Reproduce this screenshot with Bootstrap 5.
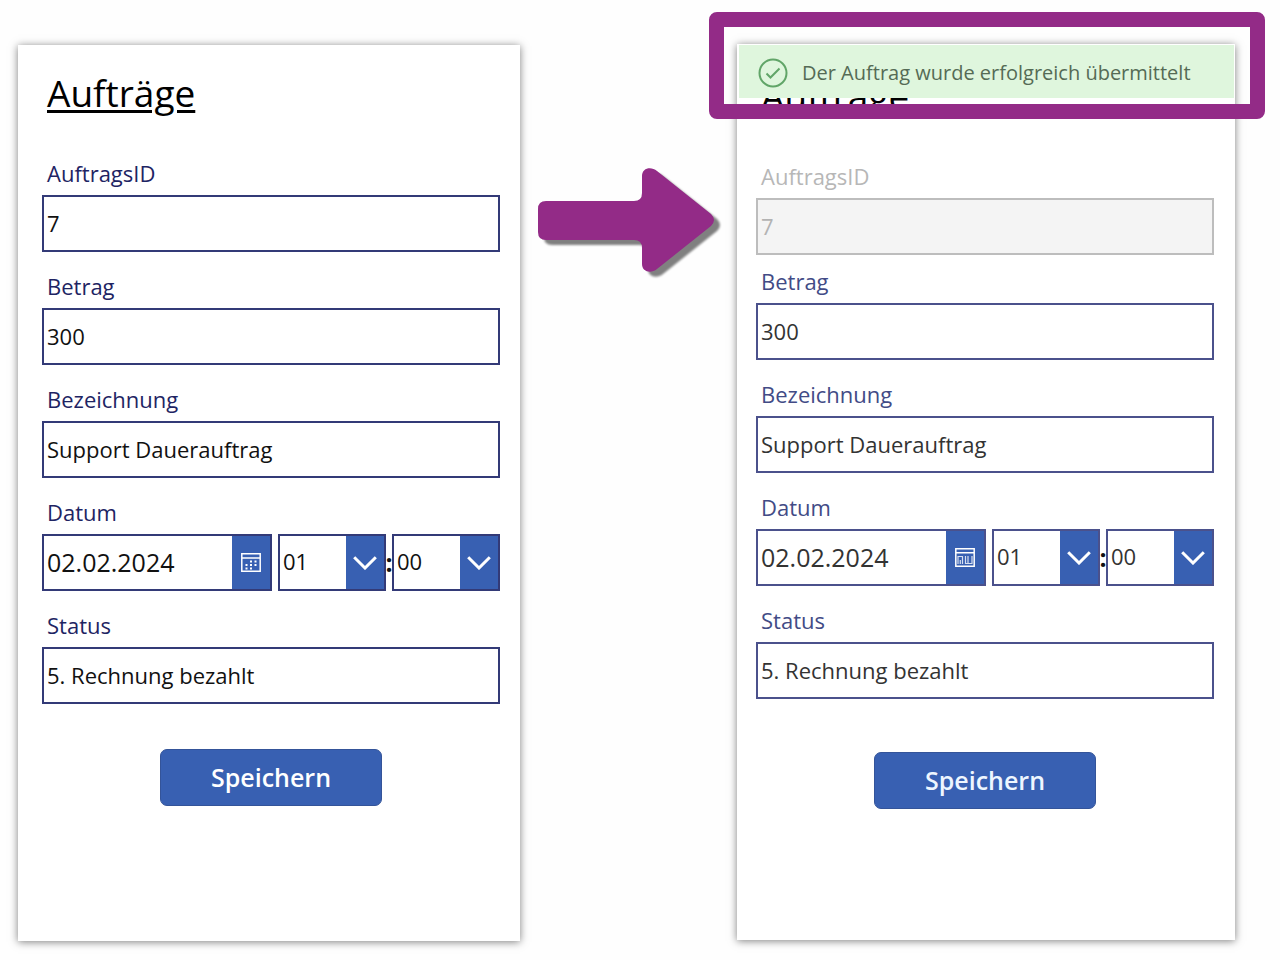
<!DOCTYPE html>
<html lang="de">
<head>
<meta charset="utf-8">
<meta name="viewport" content="width=device-width, initial-scale=1">
<title>Aufträge</title>
<link href="https://cdn.jsdelivr.net/npm/bootstrap@5.3.0/dist/css/bootstrap.min.css" rel="stylesheet">
<style>
  :root { --ink: #1e2463; --line: #333a77; --blue: #3860b2; --plum: #932b87; }
  body { font-family: "Open Sans", "Noto Sans", sans-serif; font-size: 22px; color: #111; background: #fefefe; }
  .stage { display: grid; grid-template-columns: minmax(0, 502fr) 217px minmax(0, 498fr); padding: 44px 45px 18px 18px; }
  .panel { background: #fff; min-height: 896px; box-shadow: 0 1px 8px rgba(0,0,0,.5); padding: 0 20px 40px 24px; }
  .panel-before { margin-top: 1px; margin-bottom: -1px; }
  .panel-after { padding-left: 19px; padding-right: 21px; }
  .panel h1 { font-size: 37px; line-height: 54px; font-weight: 400; color: #000; text-decoration: underline; text-decoration-thickness: 3px; text-underline-offset: 3px; margin: 0 0 39px; padding: 21px 5px 0; }
  .panel-after h1 { padding-top: 25px; }
  .field { margin-bottom: 20px; }
  .field label { display: block; line-height: 28px; margin-bottom: 8px; padding-left: 5px; color: var(--ink); }
  .box { width: 100%; height: 57px; border: 2px solid var(--line); border-radius: 0; background: #fff; color: #111; padding: 0 3px 2px; font-size: 22px; outline-offset: 0; }
  .split { display: grid; grid-template-columns: minmax(0, 230fr) 6px minmax(0, 108fr) 6px minmax(0, 108fr); }
  .date-box { display: flex; padding: 0; }
  .date-box input { flex: 1; min-width: 0; border: 0; background: none; padding: 0 3px; font-size: 25px; color: inherit; }
  .date-box button, .chev { width: 38px; border: 0; padding: 0; background: var(--blue); color: #fff; display: flex; align-items: center; justify-content: center; }
  .chev { top: 2px; bottom: 2px; right: 2px; pointer-events: none; }
  select.box { appearance: none; }
  .colon { font-weight: 700; font-size: 25px; line-height: 57px; display: flex; justify-content: center; }
  .save { width: 222px; height: 57px; background: var(--blue); color: #fff; border: 1px solid #345499; border-radius: 7px; font-size: 25px; font-weight: 600; margin-top: 25px; }
  .panel-after .field label { color: #424b86; }
  .panel-after .box { color: #333; border-color: #4b518c; }
  .panel-after .save { margin-top: 33px; color: #eef6ff; }
  .panel-after .field.locked { margin-bottom: 12px; }
  .panel-after .field.locked label { color: #b7b7b7; }
  .panel-after .locked .box { color: #b3b3b3; background: #f4f4f4; border-color: #bdbdbd; opacity: 1; }
  .notice { top: 1px; left: 2px; right: 1px; height: 53px; background: #dff6dd; color: #556b55; padding: 3px 19px 0; gap: 14px; white-space: nowrap; font-size: 20px; font-weight: 500; }
  .spot { top: -32px; left: -28px; right: -30px; height: 107px; border: 15px solid var(--plum); border-radius: 8px; z-index: 3; pointer-events: none; }
  .arrow { margin: 124px 0 0 18px; overflow: visible; filter: drop-shadow(6px 5px 1px #808080); }
</style>
</head>
<body>
<svg class="d-none">
  <symbol id="cal" viewBox="0 0 20 19"><g fill="none" stroke="currentColor" stroke-width="1.5"><path d="M.8.8h18.4v17.4H.8zM.8 5h18.4"/></g><path fill="currentColor" d="M9 7.5h2v2H9zm4.500 0h2v2h-2zM4.500 11h2v2h-2zM9 11h2v2H9zm4.500 0h2v2h-2zM4.500 14.500h2v2h-2zM9 14.500h2v2H9z"/></symbol>
  <symbol id="calpress" viewBox="0 0 20 19"><g fill="none" stroke="currentColor" stroke-width="1.500"><path d="M.8.8h18.4v17.4H.8zM.8 4.800h18.4"/><path stroke-width="1.200" opacity=".8" d="M3 16V8.500h4.500V16M5.300 16v-4M10.500 8v7.500h2.500V8M13 15.500h4V8"/></g></symbol>
  <symbol id="down" viewBox="0 0 24 14"><path d="M1.200 1.300 12 12 22.800 1.300" fill="none" stroke="currentColor" stroke-width="3"/></symbol>
</svg>
<main class="stage">
  <form class="panel panel-before">
    <h1>Aufträge</h1>
    <div class="field"><label for="a1">AuftragsID</label><input class="box" id="a1" value="7"></div>
    <div class="field"><label for="a2">Betrag</label><input class="box" id="a2" value="300"></div>
    <div class="field"><label for="a3">Bezeichnung</label><input class="box" id="a3" value="Support Dauerauftrag"></div>
    <div class="field"><label for="a4">Datum</label>
      <div class="split">
        <div class="box date-box"><input id="a4" value="02.02.2024"><button type="button" aria-label="Kalender"><svg width="20" height="19"><use href="#cal"/></svg></button></div>
        <span></span>
        <div class="position-relative"><select class="box" aria-label="Stunde"><option>01</option></select><span class="chev position-absolute"><svg width="24" height="14"><use href="#down"/></svg></span></div>
        <span class="colon">:</span>
        <div class="position-relative"><select class="box" aria-label="Minute"><option>00</option></select><span class="chev position-absolute"><svg width="24" height="14"><use href="#down"/></svg></span></div>
      </div>
    </div>
    <div class="field"><label for="a5">Status</label><input class="box" id="a5" value="5. Rechnung bezahlt"></div>
    <div class="text-center"><button type="button" class="save">Speichern</button></div>
  </form>

  <svg class="arrow" width="176" height="105" viewBox="0 0 176 105" aria-hidden="true"><path fill="#932b87" d="M8 33H96Q104 33 104 25V8C104 0 113-2 119 3L173 46Q179 52 173 58L119 101C113 106 104 104 104 96V80Q104 72 96 72H8Q0 72 0 64V41Q0 33 8 33Z"/></svg>

  <form class="panel panel-after position-relative">
    <h1>Aufträge</h1>
    <div class="notice position-absolute d-flex align-items-center" role="status">
      <svg class="flex-shrink-0" width="30" height="30" viewBox="0 0 30 30" fill="none" stroke="#61a568" stroke-width="2" aria-hidden="true"><circle cx="15" cy="15" r="13.500"/><path d="m8.500 15.500 4 4 9-9"/></svg>
      <span>Der Auftrag wurde erfolgreich übermittelt</span>
    </div>
    <div class="spot position-absolute"></div>
    <div class="field locked"><label for="b1">AuftragsID</label><input class="box" id="b1" value="7" disabled></div>
    <div class="field"><label for="b2">Betrag</label><input class="box" id="b2" value="300"></div>
    <div class="field"><label for="b3">Bezeichnung</label><input class="box" id="b3" value="Support Dauerauftrag"></div>
    <div class="field"><label for="b4">Datum</label>
      <div class="split">
        <div class="box date-box"><input id="b4" value="02.02.2024"><button type="button" aria-label="Kalender"><svg width="20" height="19"><use href="#calpress"/></svg></button></div>
        <span></span>
        <div class="position-relative"><select class="box" aria-label="Stunde"><option>01</option></select><span class="chev position-absolute"><svg width="24" height="14"><use href="#down"/></svg></span></div>
        <span class="colon">:</span>
        <div class="position-relative"><select class="box" aria-label="Minute"><option>00</option></select><span class="chev position-absolute"><svg width="24" height="14"><use href="#down"/></svg></span></div>
      </div>
    </div>
    <div class="field"><label for="b5">Status</label><input class="box" id="b5" value="5. Rechnung bezahlt"></div>
    <div class="text-center"><button type="button" class="save">Speichern</button></div>
  </form>
</main>
<script src="https://cdn.jsdelivr.net/npm/bootstrap@5.3.0/dist/js/bootstrap.bundle.min.js"></script>
</body>
</html>
